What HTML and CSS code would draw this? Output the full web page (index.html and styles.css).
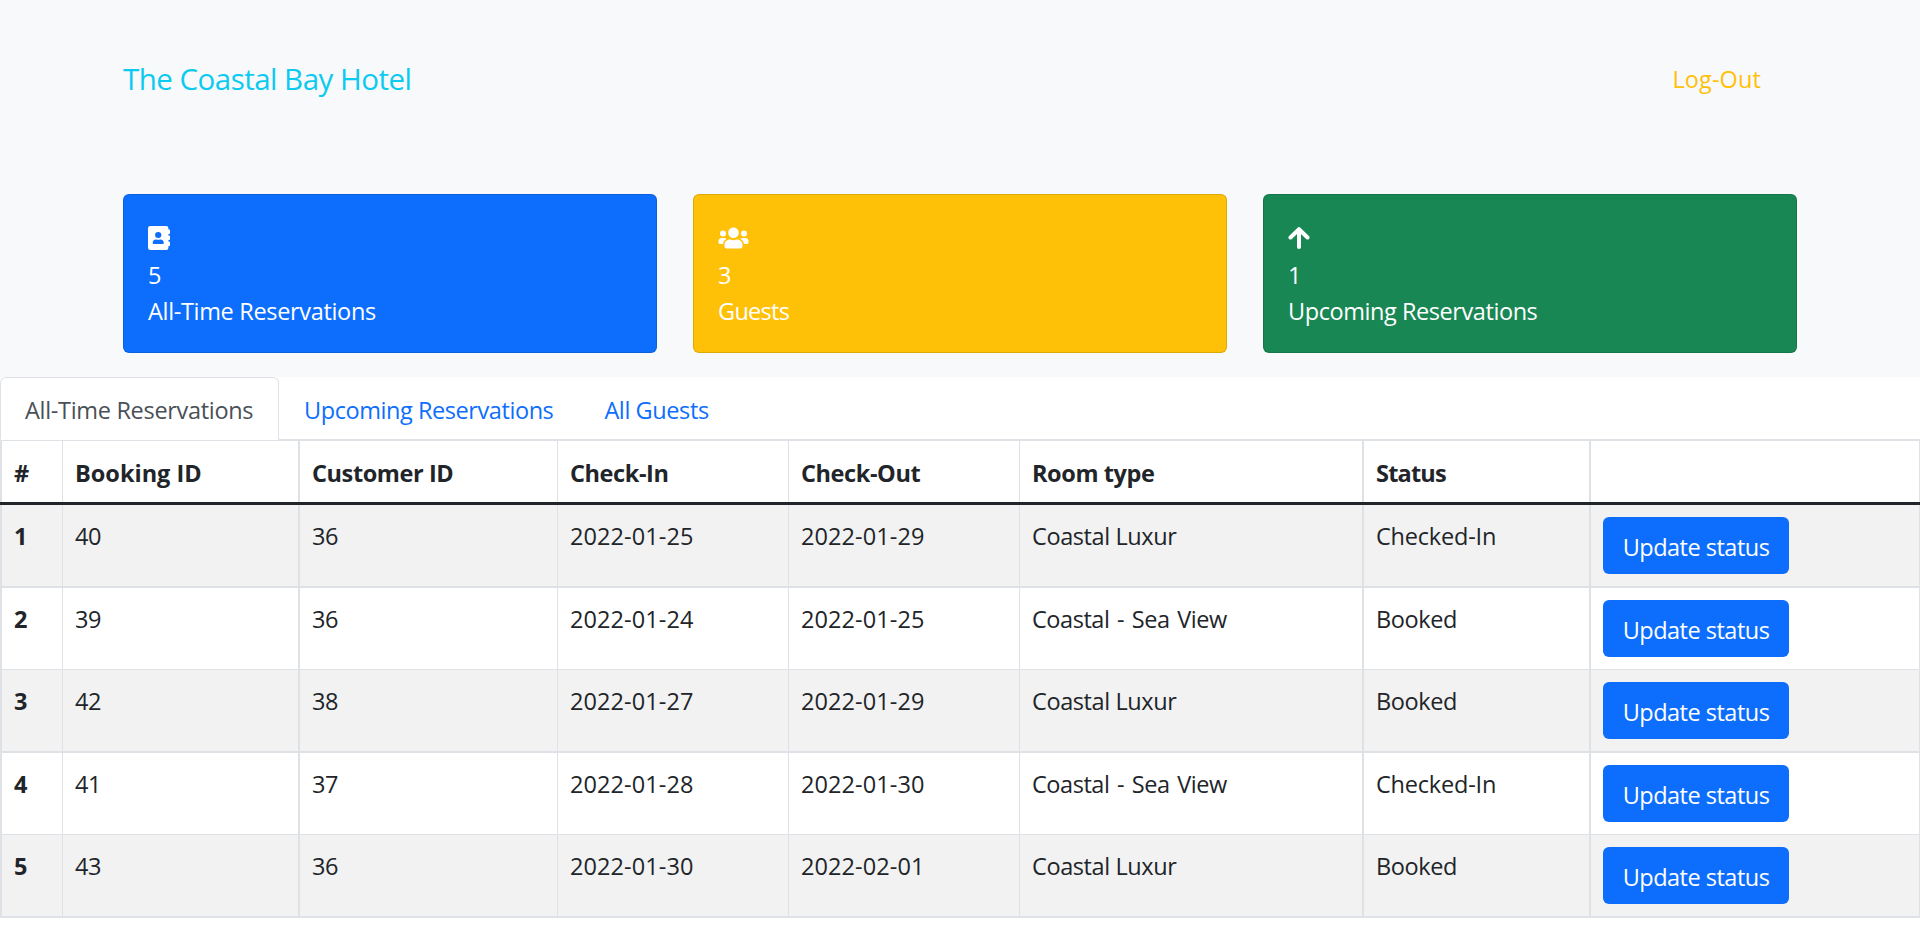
FILE: index.html
```html
<!DOCTYPE html>
<html lang="en">
<head>
<meta charset="utf-8">
<title>The Coastal Bay Hotel</title>
<link rel="stylesheet" href="styles.css">
</head>
<body>
<header class="hero">
  <nav class="navbar">
    <a class="brand">The Coastal Bay Hotel</a>
    <a class="logout">Log-Out</a>
  </nav>
  <div class="cards">
    <div class="card card-primary">
      <svg class="icon" width="22" height="24" viewBox="0 0 448 512" preserveAspectRatio="none"><path fill="#fff" fill-rule="evenodd" d="M48 0h320a48 48 0 0 1 48 48v24h16c9 0 16 7 16 16v64c0 9-7 16-16 16h-16v32h16c9 0 16 7 16 16v64c0 9-7 16-16 16h-16v32h16c9 0 16 7 16 16v64c0 9-7 16-16 16h-16v40a48 48 0 0 1-48 48H48a48 48 0 0 1-48-48V48A48 48 0 0 1 48 0zM208 128a64 64 0 1 0 0 128a64 64 0 1 0 0-128zM163 288C130 288 96 316 96 352v14c0 10 10 18 22 18h180c12 0 22-8 22-18v-14c0-36-34-64-67-64h-5c-25 10-55 10-80 0z"/></svg>
      <div class="line">5</div>
      <div class="line all-time">All-Time Reservations</div>
    </div>
    <div class="card card-warning">
      <svg class="icon" width="31" height="25" viewBox="0 0 640 512"><path fill="#fff" d="M96 224a64 64 0 1 0 0-128a64 64 0 1 0 0 128zm448 0a64 64 0 1 0 0-128a64 64 0 1 0 0 128zm32 32h-64c-17.600 0-33.500 7.100-45.100 18.600 40.300 22.100 68.900 62 75.100 109.400h66c17.700 0 32-14.300 32-32v-32c0-35.300-28.700-64-64-64zm-256 0c61.900 0 112-50.100 112-112S381.900 32 320 32 208 82.100 208 144s50.100 112 112 112zm76.800 32h-8.300c-20.800 10-43.900 16-68.500 16s-47.600-6-68.500-16h-8.300C179.600 288 128 339.600 128 403.200V432c0 26.500 21.500 48 48 48h288c26.500 0 48-21.500 48-48v-28.800c0-63.600-51.600-115.200-115.200-115.200zm-223.700-13.400C161.500 263.100 145.600 256 128 256H64c-35.300 0-64 28.700-64 64v32c0 17.700 14.300 32 32 32h65.900c6.300-47.400 34.900-87.300 75.200-109.400z"/></svg>
      <div class="line">3</div>
      <div class="line guests">Guests</div>
    </div>
    <div class="card card-success">
      <svg class="icon" width="22" height="24" viewBox="0 0 22 24"><path fill="none" stroke="#fff" stroke-width="4" stroke-linecap="round" stroke-linejoin="round" d="M11 21V3.500M2.500 11.500L11 3.200L19.500 11.500"/></svg>
      <div class="line">1</div>
      <div class="line upcoming">Upcoming Reservations</div>
    </div>
  </div>
</header>
<nav class="tabs">
  <a class="tab active">All-Time Reservations</a>
  <a class="tab upcoming">Upcoming Reservations</a>
  <a class="tab all-guests">All Guests</a>
</nav>
<table class="table">
  <colgroup><col class="c1"><col class="c2"><col class="c3"><col class="c4"><col class="c5"><col class="c6"><col class="c7"><col class="c8"></colgroup>
  <thead>
    <tr><th class="thick">#</th><th class="wide">Booking ID</th><th class="thick">Customer ID</th><th>Check-In</th><th>Check-Out</th><th>Room type</th><th class="thick tight">Status</th><th class="thick last"></th></tr>
  </thead>
  <tbody>
    <tr><th>1</th><td>40</td><td>36</td><td class="date">2022-01-25</td><td class="date">2022-01-29</td><td>Coastal Luxur</td><td class="checked">Checked-In</td><td><button class="btn">Update status</button></td></tr>
    <tr><th>2</th><td>39</td><td>36</td><td class="date">2022-01-24</td><td class="date">2022-01-25</td><td class="view">Coastal - Sea View</td><td>Booked</td><td><button class="btn">Update status</button></td></tr>
    <tr><th>3</th><td>42</td><td>38</td><td class="date">2022-01-27</td><td class="date">2022-01-29</td><td>Coastal Luxur</td><td>Booked</td><td><button class="btn">Update status</button></td></tr>
    <tr><th>4</th><td>41</td><td>37</td><td class="date">2022-01-28</td><td class="date">2022-01-30</td><td class="view">Coastal - Sea View</td><td class="checked">Checked-In</td><td><button class="btn">Update status</button></td></tr>
    <tr><th>5</th><td>43</td><td>36</td><td class="date">2022-01-30</td><td class="date">2022-02-01</td><td>Coastal Luxur</td><td>Booked</td><td><button class="btn">Update status</button></td></tr>
  </tbody>
</table>
</body>
</html>
```
FILE: styles.css
```css
* { box-sizing: border-box; }
body {
  margin: 0;
  background: #fff;
  color: #212529;
  font-family: "Segoe UI", "Open Sans", "Noto Sans", sans-serif;
  font-size: 23.5px;
  line-height: 36px;
  letter-spacing: -0.4px;
  overflow: hidden;
}
.hero { height: 377px; padding: 56px 123px 0; background: #f8f9fb; }
.navbar {
  display: flex;
  justify-content: space-between;
  align-items: center;
  height: 46px;
  margin-bottom: 92px;
}
.brand { color: #0dcaf0; font-size: 29.5px; letter-spacing: -0.52px; }
.logout { color: #ffc107; margin-right: 36px; letter-spacing: 0.1px; }
.cards { display: grid; grid-template-columns: repeat(3, 1fr); gap: 36px; }
.card {
  height: 159px;
  padding: 25px 25px 0 24px;
  border: 1px solid rgba(0, 0, 0, 0.125);
  border-radius: 6px;
  color: #fff;
}
.card-primary { background: #0d6efd; }
.card-warning { background: #ffc107; }
.card-success { background: #198754; }
.icon { display: block; height: 24px; margin: 6px 0 7px; }
.all-time { letter-spacing: -0.33px; }
.guests { letter-spacing: -0.7px; }
.upcoming { letter-spacing: -0.43px; }
.tabs { display: flex; height: 63px; border-bottom: 1px solid #dee2e6; }
.tab {
  height: 63px;
  padding: 14px 24px 0;
  border: 1px solid transparent;
  border-radius: 6px 6px 0 0;
  color: #0d6efd;
}
.tab.active {
  width: 279px;
  background: #fff;
  border-color: #dee2e6 #dee2e6 #fff;
  color: #495057;
  letter-spacing: -0.31px;
}
.all-guests { margin-left: 1px; }
.table {
  width: 1920px;
  table-layout: fixed;
  border-collapse: separate;
  border-spacing: 0;
  border-top: 1px solid #dee2e6;
}
.c1 { width: 62px; }
.c2 { width: 236px; }
.c3 { width: 259px; }
.c4, .c5 { width: 231px; }
.c6 { width: 343px; }
.c7 { width: 227px; }
.c8 { width: 331px; }
th, td {
  padding: 13px 0 0 12px;
  text-align: left;
  vertical-align: top;
  border: 0 solid #dee2e6;
}
th { font-weight: 700; }

/* The heading rule runs unbroken over the column dividers. */
thead th {
  height: 64px;
  padding: 14px 0 0 13px;
  box-shadow: inset 0 -3px #212529, inset 1px 0 #dee2e6;
}
thead .thick {
  padding-left: 14px;
  box-shadow: inset 0 -3px #212529, inset 2px 0 #dee2e6;
}
thead .last { box-shadow: inset 0 -3px #212529, inset 2px 0 #dee2e6, inset -1px 0 #dee2e6; }
.wide { letter-spacing: 0; }
.tight { letter-spacing: -0.8px; }

tbody th, tbody td { height: 82px; border-left-width: 1px; border-bottom-width: 1px; }
tbody th:nth-child(1), tbody td:nth-child(3),
tbody td:nth-child(7), tbody td:nth-child(8) { border-left-width: 2px; }
tbody td:last-child { padding-top: 12px; border-right-width: 1px; }
tbody tr:nth-child(odd) > * { height: 83px; border-bottom-width: 2px; }
tbody tr:nth-child(odd) { background: #f2f2f2; }
.date { letter-spacing: 0.08px; }
.view { letter-spacing: -0.45px; word-spacing: 2px; }
.checked { letter-spacing: -0.2px; }
.btn {
  display: block;
  width: 186px;
  height: 57px;
  padding: 2px 0 0;
  border: 0;
  border-radius: 6px;
  background: #0d6efd;
  color: #fff;
  font: inherit;
  letter-spacing: -0.5px;
}
```
